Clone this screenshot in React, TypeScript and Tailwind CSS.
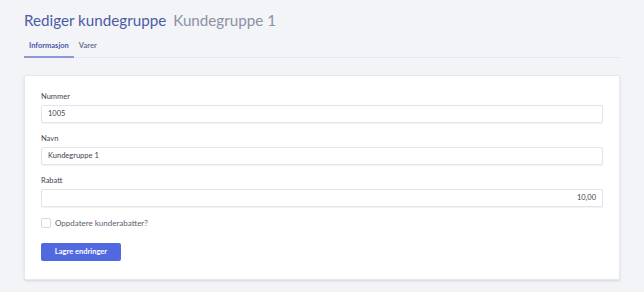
const FIELDS = [
  { label: 'Nummer', value: '1005', align: 'text-left' },
  { label: 'Navn', value: 'Kundegruppe 1', align: 'text-left' },
  { label: 'Rabatt', value: '10,00', align: 'text-right' },
];

export default function App() {
  return (
    <main className="h-[292px] bg-[#f3f4f8] px-6 font-['Lato',sans-serif]">
      {/* Header */}
      <div className="flex items-baseline gap-[7px] pt-[9px] h-[36px]">
        <h1 className="text-[15.2px] text-[#4b5aa6]">Rediger kundegruppe</h1>
        <span className="text-[15.2px] text-[#8b90a3]">Kundegruppe 1</span>
      </div>

      {/* Tabs */}
      <div className="flex border-b border-[#e6e8ef] h-[22px]">
        <div className="px-[5px] text-[7.5px] font-bold text-[#4b5aa6] border-b-2 border-[#8d99d8] -mb-px leading-[20px]">
          Informasjon
        </div>
        <div className="px-[5px] text-[7.5px] font-bold text-[#6b7190] leading-[20px]">Varer</div>
      </div>

      {/* Card */}
      <div className="mt-[17px] bg-white border border-[#e7e8ee] rounded-[2px] shadow-sm pl-4 pr-4 pt-[16px] pb-[18px]">
        <div className="flex flex-col gap-[11px]">
          {FIELDS.map((f) => (
            <div key={f.label}>
              <label className="block text-[7.5px] text-[#3f4453] leading-[10px] mb-[3px]">{f.label}</label>
              <div
                className={`h-[18px] border border-[#e3e4ea] rounded-[2px] shadow-[0_1px_1px_rgba(0,0,0,0.05)] px-[6px] text-[7.5px] leading-[16px] text-[#3f4453] ${f.align}`}
              >
                {f.value}
              </div>
            </div>
          ))}
        </div>

        <div className="flex items-center gap-[4px] mt-[10px]">
          <div className="w-[10px] h-[10px] border border-[#d7d9e0] rounded-[2px] bg-white" />
          <span className="text-[8px] text-[#5a5f70]">Oppdatere kunderabatter?</span>
        </div>

        <button className="mt-[14px] w-[80px] h-[18px] bg-[#5068e0] rounded-[2px] text-white text-[7.5px] font-bold">
          Lagre endringer
        </button>
      </div>
    </main>
  );
}
